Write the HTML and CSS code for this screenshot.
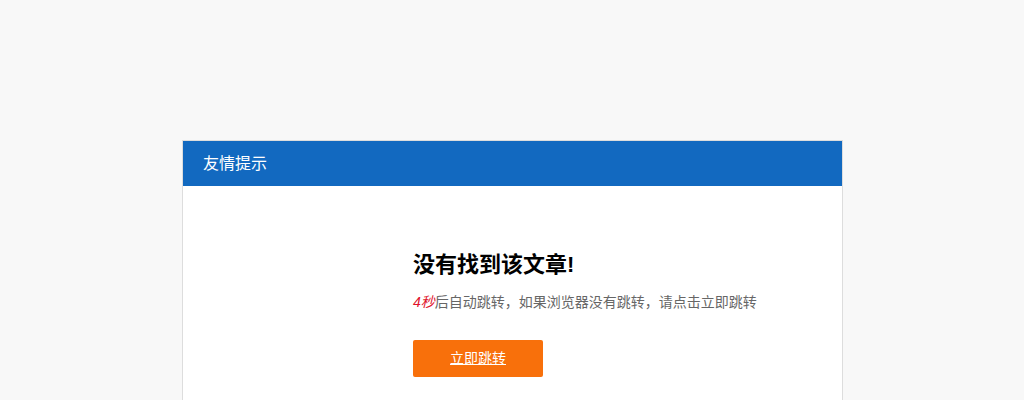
FILE: index.html
```html
<!DOCTYPE html>
<html lang="zh-CN">
<head>
<meta charset="utf-8">
<title>友情提示</title>
<link rel="stylesheet" href="styles.css">
</head>
<body>
<div class="card">
  <div class="card-head">友情提示</div>
  <div class="card-body">
    <h1 class="title">没有找到该文章!</h1>
    <p class="desc"><em class="sec">4秒</em>后自动跳转，如果浏览器没有跳转，请点击立即跳转</p>
    <a class="btn" href="#">立即跳转</a>
  </div>
</div>
</body>
</html>
```
FILE: styles.css
```css
html, body {
  margin: 0;
  padding: 0;
  background: #f8f8f8;
  font-family: "Liberation Sans", "Noto Sans CJK SC", sans-serif;
}
.card {
  width: 659px;
  margin: 140px 0 0 182px;
  background: #fff;
  border: 1px solid #dddddd;
  min-height: 300px;
}
.card-head {
  height: 45px;
  line-height: 45px;
  background: #1269c0;
  color: #fff;
  font-size: 16px;
  padding-left: 20px;
}
.card-body {
  padding: 63px 0 0 230px;
}
.title {
  margin: 0;
  font-size: 22px;
  line-height: 32px;
  font-weight: bold;
  color: #000;
}
.desc {
  margin: 10px 0 0;
  font-size: 14px;
  line-height: 22px;
  color: #666;
}
.sec {
  color: #e0122a;
  font-style: italic;
}
.btn {
  display: inline-block;
  margin-top: 27px;
  width: 130px;
  height: 37px;
  line-height: 37px;
  text-align: center;
  background: #f8700b;
  color: #fff;
  font-size: 14px;
  border-radius: 2px;
  text-decoration: underline;
}
```
